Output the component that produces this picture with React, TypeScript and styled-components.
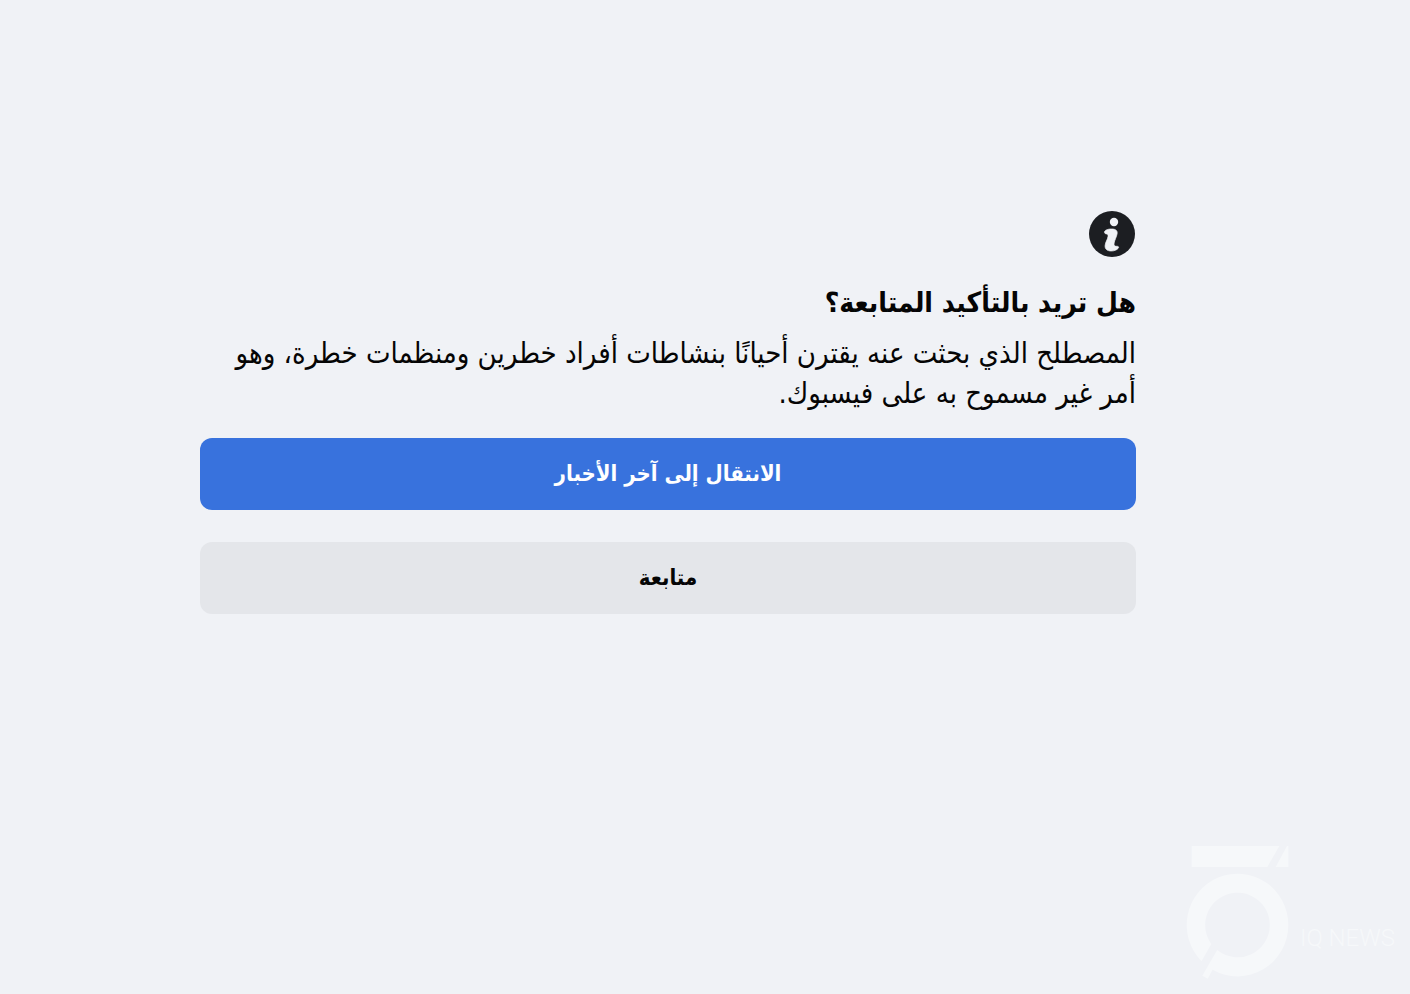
import React from "react";
import styled, { createGlobalStyle } from "styled-components";

const GlobalStyle = createGlobalStyle`
  *, *::before, *::after { box-sizing: border-box; }
  body {
    margin: 0;
    background: #f0f2f6;
    color: #050505;
    font-family: "DejaVu Sans Condensed", "DejaVu Sans", sans-serif;
  }
`;

const Page = styled.div`
  display: flex;
  flex-direction: column;
  justify-content: space-between;
  min-height: 100vh;
`;

const Notice = styled.main`
  display: flex;
  flex-direction: column;
  align-items: stretch;
  padding: 211px 274px 32px 200px;
`;

const InfoIcon = styled.svg`
  display: block;
  width: 46px;
  height: 46px;
  margin-inline-start: 1px;
`;

const Title = styled.h1`
  margin: 22px 0 0;
  font-size: 28px;
  line-height: 48px;
  font-weight: 700;
`;

const Message = styled.p`
  margin: 6px 0 0;
  font-size: 29px;
  line-height: 40px;
`;

const Actions = styled.div`
  display: flex;
  flex-direction: column;
  gap: 32px;
  margin-top: 25px;
`;

const Button = styled.button<{ $primary?: boolean }>`
  height: 72px;
  padding: 0 24px;
  border: 0;
  border-radius: 12px;
  background: ${(p) => (p.$primary ? "#3872dd" : "#e4e6ea")};
  color: ${(p) => (p.$primary ? "#ffffff" : "#050505")};
  font-family: inherit;
  font-size: 22px;
  line-height: 32px;
  font-weight: 700;
  cursor: pointer;
`;

const Brand = styled.footer`
  display: flex;
  align-items: flex-end;
  justify-content: flex-end;
  gap: 10px;
  padding: 0 14px 12px 0;
  color: #f6f8fa;
`;

const BrandMark = styled.svg`
  display: block;
  width: 104px;
  height: 142px;
`;

const BrandName = styled.span`
  width: 96px;
  padding-bottom: 28px;
  font-family: Roboto, "Liberation Sans", sans-serif;
  font-size: 24px;
  font-weight: 300;
  line-height: 32px;
  white-space: nowrap;
`;

export default function App() {
  return (
    <Page>
      <GlobalStyle />
      <Notice dir="rtl" lang="ar">
        <InfoIcon viewBox="0 0 46 46" aria-hidden="true">
          <circle cx="23" cy="23" r="23" fill="#1c1e22" />
          <circle cx="25" cy="11" r="4.2" fill="#f0f2f6" />
          <path
            fill="#f0f2f6"
            stroke="#f0f2f6"
            strokeWidth="0.7"
            strokeLinejoin="round"
            d="M15.500 21.600C15.200 19.200 18.600 18 22.500 18c4.300 0 6.200 1.700 5.600 4.800-.5 2.900-2.500 6.400-3 9.200-.4 2.300.4 3.400 2.600 3.300 1.800-.1 2.400.8 1.500 2-1.300 1.700-4.100 2.700-6.900 2.700-4.300 0-6.500-2.100-6.200-5.500.3-3.400 2.500-5.800 2.900-8.900.2-1.800-.2-2.700-1.600-2.700-1 0-1.700-.4-1.900-1.300Z"
          />
        </InfoIcon>
        <Title>هل تريد بالتأكيد المتابعة؟</Title>
        <Message>
          المصطلح الذي بحثت عنه يقترن أحيانًا بنشاطات أفراد خطرين ومنظمات خطرة، وهو
          أمر غير مسموح به على فيسبوك.
        </Message>
        <Actions>
          <Button type="button" $primary>الانتقال إلى آخر الأخبار</Button>
          <Button type="button">متابعة</Button>
        </Actions>
      </Notice>
      <Brand>
        <BrandMark viewBox="0 0 104 142" fill="currentColor" aria-hidden="true">
          <path d="M5.700 6H93.300L81.300 27H5.700Z" />
          <path d="M101 6H102.300V27H89.700Z" />
          <path d="M15.500 121.200A50.800 51.300 0 1 1 102.300 85A50.800 51.300 0 0 1 26.600 129.800L21.700 138.700L16.300 135.700L31.200 110.100A32.300 32.300 0 0 0 83.800 85A32.300 32.300 0 1 0 25.300 103.900Z" />
        </BrandMark>
        <BrandName>IQ NEWS</BrandName>
      </Brand>
    </Page>
  );
}
